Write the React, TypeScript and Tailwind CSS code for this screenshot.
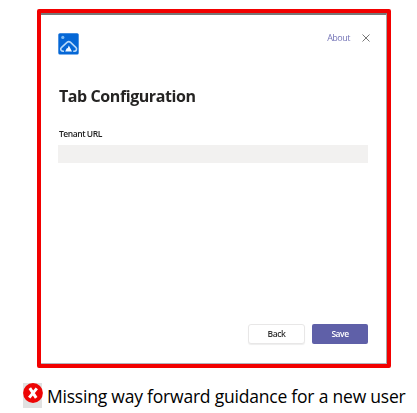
function AppLogo() {
  return (
    <svg className="block h-[22px] w-[21px]" viewBox="0 0 21 22" fill="none" aria-hidden="true">
      <rect x="0.3" y="0.3" width="20.4" height="21.2" rx="1.5" fill="#0567d6" />
      <circle cx="4.8" cy="4.4" r="1.6" fill="#7fbaf2" />
      <path
        d="M6 18.2H5C2.6 18.2 1.9 15.8 3.6 14.4L9 9.4C10.2 8.4 11.4 8.4 12.6 9.4L17.8 14.4C19.3 15.9 18.5 18.2 16.4 18.2H15.2"
        stroke="#b5d8fa"
        strokeWidth="1.6"
      />
      <path d="M10.8 12.6L14 18.6H7.2L8.6 15.4L9.8 15Z" fill="#f2f8ff" />
    </svg>
  );
}

function ConfigurationPanel() {
  return (
    <section className="flex h-[359px] w-[354px] flex-col rounded-[2px] border-4 border-[#f20000] bg-white">
      <div className="flex flex-1 flex-col border-t-2 border-r border-b border-t-[#777777] border-r-[#a5a5a5] border-b-[#b3b3bd] pr-[18px] pl-[17px]">
        <div className="flex flex-1 flex-col blur-[0.5px]">
          <header className="flex h-[43px] items-start justify-between pt-[18px]">
            <AppLogo />
            <div className="flex items-center gap-[12px]">
              <a className="text-[9px] leading-[10px] tracking-[-0.5px] text-[#7676b8]">About</a>
              <svg className="mr-[-2px] block size-[8px]" viewBox="0 0 8 8" aria-label="Close">
                <path d="M0.5 0.5L7.5 7.5M7.5 0.5L0.5 7.5" stroke="#777777" strokeWidth="1" />
              </svg>
            </div>
          </header>
          <h1 className="mt-[26px] ml-[1px] text-[16px] leading-[24px] font-bold tracking-[-0.42px] whitespace-nowrap text-[#252423]">
            Tab Configuration
          </h1>
          <label className="mt-[20px] ml-[1px] text-[8.5px] leading-[12px] font-semibold tracking-[-0.45px] whitespace-nowrap text-[#222222]">
            Tenant URL
          </label>
          <div className="mt-[5px] ml-[0.4px] h-[18px] bg-[#f2f1f0]" />
          <footer className="mt-auto mb-[19px] flex justify-end gap-[7px]">
            <button className="h-[20px] w-[57px] rounded-[3px] border border-[#e8e7e7] bg-white text-[8.5px] leading-[18px] font-semibold tracking-[-0.45px] text-[#333333] shadow-[0_1px_1px_#eeeeee]">
              Back
            </button>
            <button className="h-[20px] w-[56px] rounded-[2px] bg-[#5f60a8] text-[8.5px] leading-[20px] font-semibold tracking-[-0.45px] text-white">
              Save
            </button>
          </footer>
        </div>
      </div>
    </section>
  );
}

function ErrorNote() {
  return (
    <div className="mt-[15px] ml-[23px] flex h-[25px] items-start">
      <span className="block h-[25px] w-[19px] shrink-0 bg-[#e1e1e1]">
        <svg className="block h-[20px] w-[20px] max-w-none" viewBox="0 0 20 20" aria-hidden="true">
          <circle cx="10" cy="10" r="9.9" fill="#ed0505" />
          <path d="M6.8 5.2L13.2 14.8M13.8 5.4L6.2 14.6" stroke="white" strokeWidth="3" />
        </svg>
      </span>
      <p className="mt-[1px] ml-[5px] text-[17.5px] leading-[25px] tracking-[-0.21px] whitespace-nowrap text-black">
        Missing way forward guidance for a new user
      </p>
    </div>
  );
}

export default function App() {
  return (
    <main className="h-[413px] w-[417px] overflow-hidden bg-white pt-[9px] font-['Open_Sans','Noto_Sans',sans-serif]">
      <div className="ml-[37px]">
        <ConfigurationPanel />
      </div>
      <ErrorNote />
    </main>
  );
}
